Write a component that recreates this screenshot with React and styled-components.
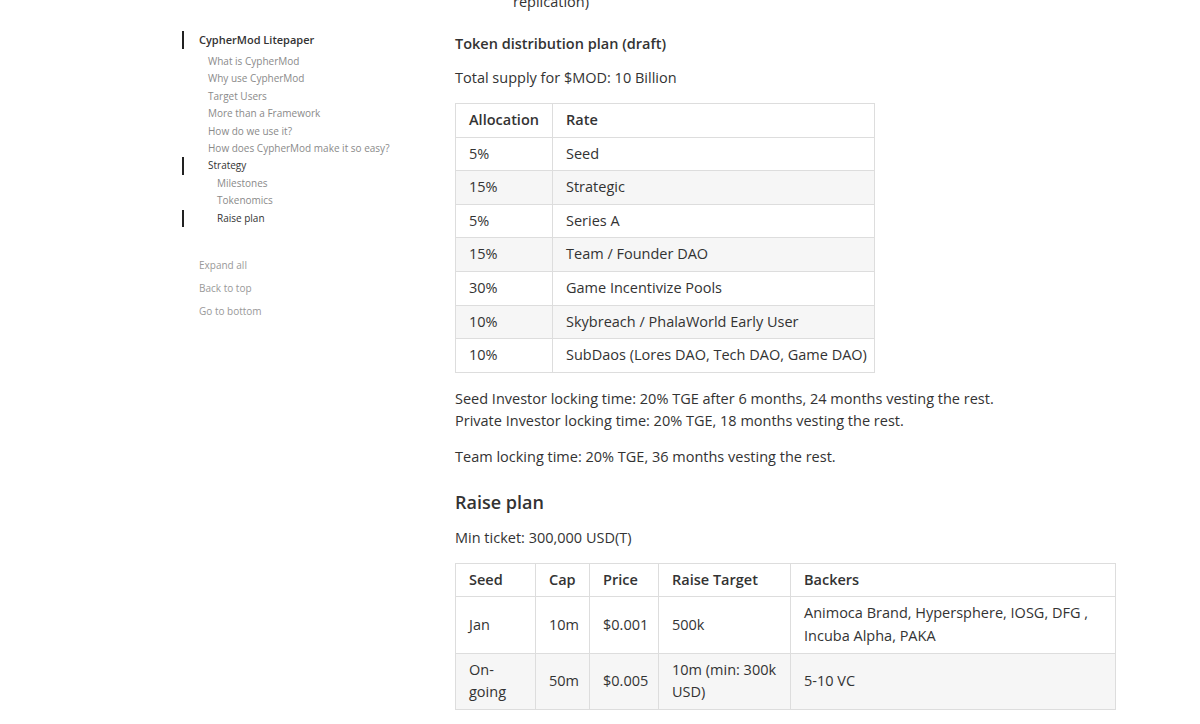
import React from "react";
import styled, { createGlobalStyle } from "styled-components";

const GlobalStyle = createGlobalStyle`
  html, body {
    margin: 0;
    padding: 0;
    background: #fff;
  }
  body {
    font-family: "Open Sans", "Noto Sans", sans-serif;
    color: #333;
    overflow: hidden;
  }
`;

const toc = [
  { label: "What is CypherMod", level: 1 },
  { label: "Why use CypherMod", level: 1 },
  { label: "Target Users", level: 1 },
  { label: "More than a Framework", level: 1 },
  { label: "How do we use it?", level: 1 },
  { label: "How does CypherMod make it so easy?", level: 1 },
  { label: "Strategy", level: 1, active: true },
  { label: "Milestones", level: 2 },
  { label: "Tokenomics", level: 2 },
  { label: "Raise plan", level: 2, active: true },
];

const allocation = [
  ["5%", "Seed"],
  ["15%", "Strategic"],
  ["5%", "Series A"],
  ["15%", "Team / Founder DAO"],
  ["30%", "Game Incentivize Pools"],
  ["10%", "Skybreach / PhalaWorld Early User"],
  ["10%", "SubDaos (Lores DAO, Tech DAO, Game DAO)"],
];

const raise = [
  ["Jan", "10m", "$0.001", "500k", "Animoca Brand, Hypersphere, IOSG, DFG , Incuba Alpha, PAKA"],
  ["On-going", "50m", "$0.005", "10m (min: 300k USD)", "5-10 VC"],
];

function App() {
  return (
    <Page>
      <GlobalStyle />
      <Sidebar>
        <TocTitle>CypherMod Litepaper</TocTitle>
        <TocList>
          {toc.map((t) => (
            <TocItem key={t.label} level={t.level} active={t.active}>
              {t.label}
            </TocItem>
          ))}
        </TocList>
        <Actions>
          <a>Expand all</a>
          <a>Back to top</a>
          <a>Go to bottom</a>
        </Actions>
      </Sidebar>

      <Main>
        <CutLine>replication)</CutLine>
        <SubHeading>Token distribution plan (draft)</SubHeading>
        <P>Total supply for $MOD: 10 Billion</P>

        <Table width={420} nowrap>
          <colgroup>
            <col style={{ width: 97 }} />
            <col />
          </colgroup>
          <thead>
            <tr>
              <th>Allocation</th>
              <th>Rate</th>
            </tr>
          </thead>
          <tbody>
            {allocation.map(([a, r], i) => (
              <tr key={i}>
                <td>{a}</td>
                <td>{r}</td>
              </tr>
            ))}
          </tbody>
        </Table>

        <P>
          Seed Investor locking time: 20% TGE after 6 months, 24 months vesting the rest.
          <br />
          Private Investor locking time: 20% TGE, 18 months vesting the rest.
        </P>
        <P gap={14}>Team locking time: 20% TGE, 36 months vesting the rest.</P>

        <Heading>Raise plan</Heading>
        <P>Min ticket: 300,000 USD(T)</P>

        <Table width={661}>
          <colgroup>
            <col style={{ width: 80 }} />
            <col style={{ width: 54 }} />
            <col style={{ width: 69 }} />
            <col style={{ width: 132 }} />
            <col />
          </colgroup>
          <thead>
            <tr>
              <th>Seed</th>
              <th>Cap</th>
              <th>Price</th>
              <th>Raise Target</th>
              <th>Backers</th>
            </tr>
          </thead>
          <tbody>
            {raise.map((row, i) => (
              <tr key={i}>
                {row.map((c, j) => (
                  <td key={j}>{c}</td>
                ))}
              </tr>
            ))}
          </tbody>
        </Table>
      </Main>
    </Page>
  );
}

export default App;

const Page = styled.div`
  display: flex;
  align-items: flex-start;
  width: 1200px;
  height: 724px;
  overflow: hidden;
`;

const Sidebar = styled.nav`
  width: 273px;
  flex: none;
  padding: 31px 0 0 182px;
  box-sizing: content-box;
  font-size: 10px;
`;

const TocTitle = styled.div`
  font-size: 11px;
  font-weight: 600;
  color: #333;
  line-height: 18px;
  padding-left: 15px;
  border-left: 2px solid #222;
`;

const TocList = styled.div`
  margin-top: 4px;
  display: flex;
  flex-direction: column;
`;

const TocItem = styled.div`
  line-height: 17.4px;
  padding-left: ${(p) => 15 + p.level * 9}px;
  color: ${(p) => (p.active ? "#333" : "#8a8a8a")};
  border-left: 2px solid ${(p) => (p.active ? "#222" : "transparent")};
  white-space: nowrap;
`;

const Actions = styled.div`
  margin-top: 30px;
  padding-left: 17px;
  display: flex;
  flex-direction: column;
  gap: 7px;
  a {
    color: #999;
    line-height: 16px;
    cursor: pointer;
  }
`;

const Main = styled.main`
  flex: 1;
  font-size: 14.5px;
  line-height: 22px;
  color: #333;
`;

const CutLine = styled.div`
  margin-top: -9px;
  padding-left: 58px;
  line-height: 22px;
`;

const SubHeading = styled.div`
  font-weight: 600;
  margin-top: 20px;
`;

const Heading = styled.h2`
  font-size: 18px;
  font-weight: 600;
  line-height: 26px;
  margin: 21px 0 12px;
  color: #333;
`;

const P = styled.p`
  margin: ${(p) => p.gap || 12}px 0 0;
`;

const Table = styled.table`
  border-collapse: collapse;
  width: ${(p) => p.width}px;
  table-layout: fixed;
  margin: 14px 0 15px;
  th,
  td {
    border: 1px solid #ddd;
    padding: 5px 13px;
    text-align: left;
    vertical-align: middle;
    line-height: 22.6px;
    white-space: ${(p) => (p.nowrap ? "nowrap" : "normal")};
  }
  th {
    font-weight: 600;
  }
  tbody tr:nth-child(even) {
    background: #f6f6f6;
  }
`;
